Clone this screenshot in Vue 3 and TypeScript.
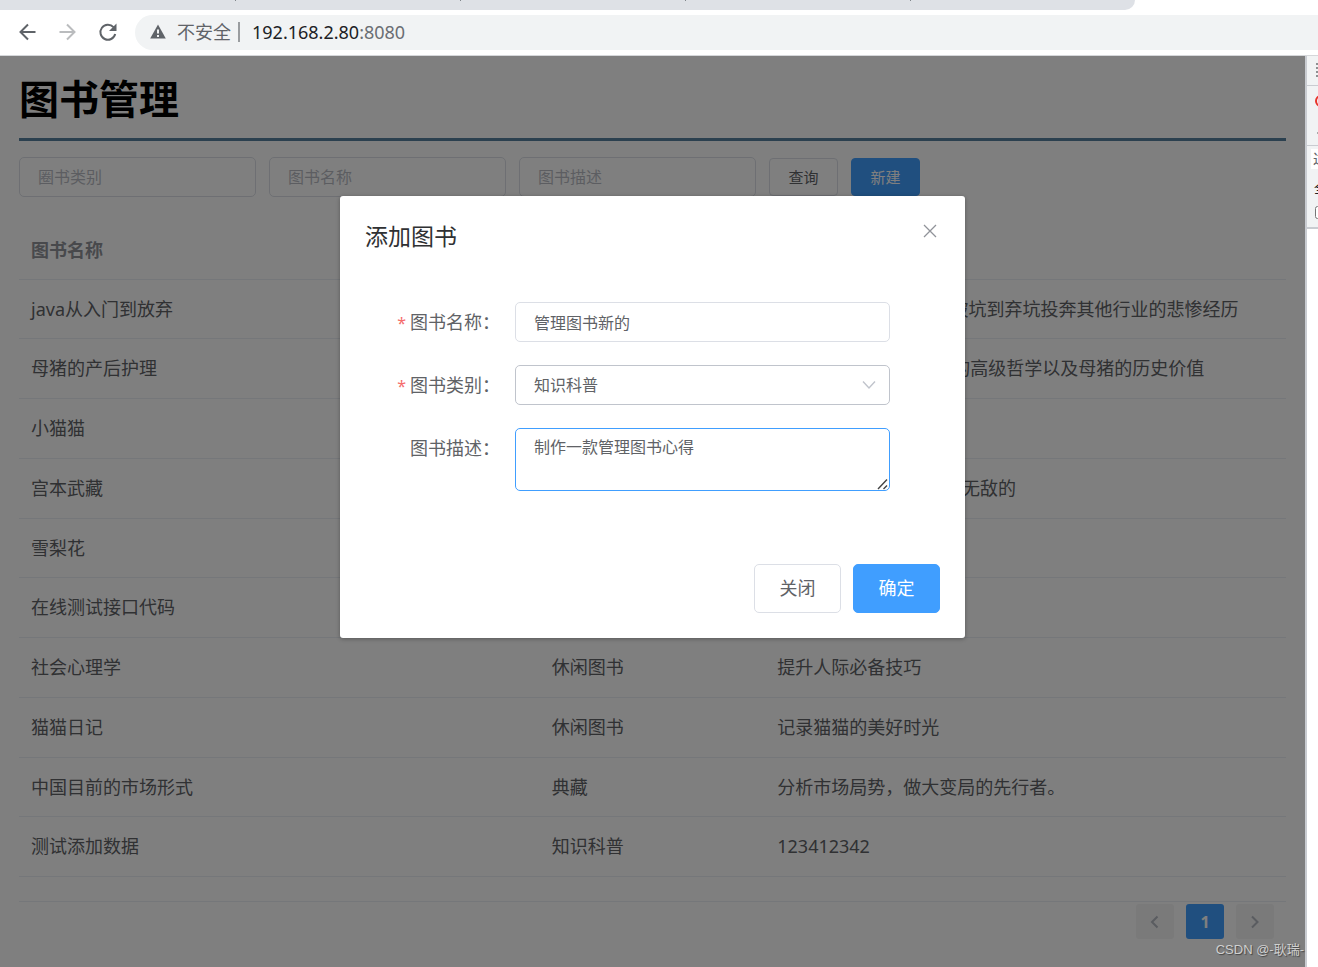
<script setup lang="ts">
import { ref } from 'vue'

interface Book {
  name: string
  type: string
  description: string
}

const books: Book[] = [
  { name: 'java从入门到放弃', type: '典藏', description: '讲述it从业者从入坑到被坑到弃坑投奔其他行业的悲惨经历' },
  { name: '母猪的产后护理', type: '知识科普', description: '浅谈100种母猪护理中的高级哲学以及母猪的历史价值' },
  { name: '小猫猫', type: '休闲图书', description: '' },
  { name: '宫本武藏', type: '典藏', description: '宫本武藏的二刀流剑法 无敌的' },
  { name: '雪梨花', type: '休闲图书', description: '' },
  { name: '在线测试接口代码', type: '知识科普', description: '' },
  { name: '社会心理学', type: '休闲图书', description: '提升人际必备技巧' },
  { name: '猫猫日记', type: '休闲图书', description: '记录猫猫的美好时光' },
  { name: '中国目前的市场形式', type: '典藏', description: '分析市场局势，做大变局的先行者。' },
  { name: '测试添加数据', type: '知识科普', description: '123412342' },
]

const filters = ['圈书类别', '图书名称', '图书描述']
const types = ['知识科普', '休闲图书', '典藏']

const name = ref('管理图书新的')
const type = ref('知识科普')
const description = ref('制作一款管理图书心得')
</script>

<template>
  <div class="window">
    <header class="chrome">
      <div class="tabs"><i v-for="n in 4" :key="n" class="tab"></i></div>
      <div class="toolbar">
        <button class="nav" aria-label="后退">
          <svg width="20" height="20" viewBox="0 0 20 20" fill="none" stroke="#5f6368" stroke-width="2"><path d="M18.500 9H4M11 1.500L3.500 9l7.500 7.500" /></svg>
        </button>
        <button class="nav" aria-label="前进">
          <svg width="20" height="20" viewBox="0 0 20 20" fill="none" stroke="#babcbe" stroke-width="2"><path d="M2.500 9H17M10 1.500L17.500 9l-7.500 7.500" /></svg>
        </button>
        <button class="nav" aria-label="刷新">
          <svg width="20" height="20" viewBox="0 0 20 20"><path d="M16.500 4.200A7.500 7.500 0 1 0 18.200 11" fill="none" stroke="#5f6368" stroke-width="2" /><path d="M19.500 0.500V8H12z" fill="#5f6368" /></svg>
        </button>
        <div class="address">
          <svg width="16" height="15" viewBox="0 0 16 15"><path d="M8 0.500L15.800 14.500H0.200z" fill="#5f6368" /><path d="M8 5.500v4M8 11v2" stroke="#f1f3f4" stroke-width="2" /></svg>
          <span class="unsafe">不安全</span>
          <span class="host">192.168.2.80<span class="port">:8080</span></span>
        </div>
      </div>
    </header>

    <div class="content">
      <main class="page">
        <h1>图书管理</h1>
        <form class="filters" @submit.prevent>
          <input v-for="f in filters" :key="f" type="text" :placeholder="f" :aria-label="f" />
          <button class="query">查询</button>
          <button class="create">新建</button>
        </form>

        <table>
          <colgroup><col class="c-name" /><col class="c-type" /><col /></colgroup>
          <thead>
            <tr><th>图书名称</th><th>图书类别</th><th>图书描述</th></tr>
          </thead>
          <tbody>
            <tr v-for="b in books" :key="b.name">
              <td>{{ b.name }}</td><td>{{ b.type }}</td><td>{{ b.description }}</td>
            </tr>
          </tbody>
        </table>

        <nav class="pager" aria-label="分页">
          <button disabled aria-label="上一页"><svg width="12" height="14" viewBox="0 0 12 14"><path d="M8.500 1.500L3 7l5.500 5.500" /></svg></button>
          <button class="current">1</button>
          <button disabled aria-label="下一页"><svg width="12" height="14" viewBox="0 0 12 14"><path d="M3 1.500L8.500 7 3 12.500" /></svg></button>
        </nav>

        <div class="overlay">
          <section class="dialog" role="dialog" aria-labelledby="dialog-title">
            <div class="dialog-head">
              <h2 id="dialog-title">添加图书</h2>
              <button class="close" aria-label="关闭对话框">
                <svg width="14" height="14" viewBox="0 0 14 14"><path d="M1 1l12 12M13 1l-12 12" /></svg>
              </button>
            </div>
            <form class="fields" @submit.prevent>
              <label for="book-name"><b>*</b>图书名称：</label>
              <input id="book-name" v-model="name" type="text" />
              <label for="book-type"><b>*</b>图书类别：</label>
              <div class="select">
                <select id="book-type" v-model="type">
                  <option v-for="t in types" :key="t">{{ t }}</option>
                </select>
                <svg width="14" height="10" viewBox="0 0 14 10"><path d="M1 1.500l6 6.500 6-6.500" /></svg>
              </div>
              <label for="book-desc">图书描述：</label>
              <div class="area">
                <textarea id="book-desc" v-model="description"></textarea>
                <svg width="12" height="12" viewBox="0 0 12 12"><path d="M1 11L10 1.500M6.500 11L10 7.500" /></svg>
              </div>
            </form>
            <div class="actions">
              <button class="cancel">关闭</button>
              <button class="confirm">确定</button>
            </div>
          </section>
        </div>
        <span class="watermark">CSDN @-耿瑞-</span>
      </main>

      <aside class="devtools">
        <div class="dt-tabs"><svg width="4" height="18" viewBox="0 0 4 18"><path d="M2 1v16" stroke="#8e9092" stroke-width="4" stroke-dasharray="2 2" /></svg></div>
        <div class="dt-record">
          <svg width="12" height="12" viewBox="0 0 12 12"><circle cx="6" cy="6" r="5" fill="none" stroke="#e8332a" stroke-width="2" /></svg>
          <i></i>
        </div>
        <div class="dt-filter">
          <span class="dt-input">过</span>
          <span class="dt-all">全</span>
          <input type="checkbox" aria-label="过滤" />
        </div>
      </aside>
    </div>
  </div>
</template>

<style>
body { margin: 0; }
</style>

<style scoped>
* { box-sizing: border-box; }
.window {
  display: flex;
  flex-direction: column;
  min-height: 100vh;
  overflow: hidden;
  background: #fff;
  color: #606266;
  font: 18px/24px "Noto Sans", "Noto Sans CJK SC", sans-serif;
}
button, input, select, textarea { font-family: inherit; margin: 0; }
button { padding: 0; cursor: pointer; }
svg { display: block; flex: none; }

.chrome { border-bottom: 1px solid #d5d7da; }
.tabs {
  display: flex;
  width: 86.1%;
  height: 10px;
  padding-left: 11px;
  background: #dee1e6;
  border-radius: 0 0 10px 0;
}
.tab { width: 225px; height: 1px; border-right: 1px solid #80868b; }
.toolbar { display: flex; align-items: center; height: 45px; padding-left: 17px; }
.nav { width: 20px; height: 20px; margin-right: 20px; border: 0; background: none; }
.address {
  display: flex;
  flex: 1;
  align-items: center;
  height: 35px;
  margin-left: -2px;
  padding: 0 0 2px 15px;
  border-radius: 18px 0 0 18px;
  background: #f1f3f4;
}
.unsafe { margin-left: 11px; padding-right: 7px; border-right: 2px solid #9a9da0; line-height: 20px; color: #5f6368; }
.host { margin-left: 12px; color: #202124; }
.port { color: #6a6e73; }

.content { display: flex; flex: 1; }
.page { position: relative; flex: 1; min-width: 0; padding: 17px 19px 28px; }
h1 {
  margin: 0;
  padding-bottom: 13px;
  border-bottom: 3px solid #56819f;
  color: #000;
  font-size: 40px;
  line-height: 52px;
}
.filters { display: flex; align-items: center; gap: 13px; margin-top: 16px; }
input[type="text"], select, textarea {
  width: 100%;
  height: 40px;
  padding: 0 18px;
  border: 1px solid #dcdfe6;
  border-radius: 5px;
  outline: 0;
  background: #fff;
  color: #606266;
  font-size: 16px;
}
.filters input[type="text"] { width: 237px; }
.filters input::placeholder { color: #b8bbc3; opacity: 1; }
.filters button { width: 69px; height: 38px; padding-bottom: 2px; border: 1px solid #dcdfe6; border-radius: 4px; background: #fff; color: #606266; font-size: 15px; }
.filters .create { border-color: #409eff; background: #409eff; color: #fff; }

table { width: 100%; margin-top: 23px; border-spacing: 0; table-layout: fixed; }
.c-name { width: 41.1%; }
.c-type { width: 17.8%; }
th, td { height: 60px; padding: 0 12px; border-bottom: 1px solid #ebeef5; text-align: left; white-space: nowrap; }
th { color: #909399; }
td { padding-bottom: 1px; }
tbody tr:nth-child(4n + 1) td { height: 59px; }

.pager {
  display: flex;
  justify-content: flex-end;
  gap: 12px;
  margin-top: 24px;
  padding: 2px 12px 0;
  border-top: 1px solid #ebeef5;
}
.pager button {
  display: flex;
  align-items: center;
  justify-content: center;
  width: 38px;
  height: 35px;
  border: 0;
  border-radius: 3px;
  background: #f4f4f5;
}
.pager .current { background: #409eff; color: #fff; font-size: 16px; font-weight: 700; }
.pager path { fill: none; stroke: #b4b8c0; stroke-width: 2; }

.overlay { position: absolute; inset: 0; padding: 140px 20px 0; background: rgba(0, 0, 0, 0.5); }
.dialog {
  width: 100%;
  max-width: 625px;
  margin: 0 auto;
  padding: 25px;
  border-radius: 3px;
  background: #fff;
  box-shadow: 0 1px 4px rgba(0, 0, 0, 0.3);
}
.dialog-head { display: flex; justify-content: space-between; }
h2 { margin: 0; color: #303133; font-size: 23px; font-weight: 400; line-height: 30px; }
.close { display: flex; align-items: center; justify-content: center; width: 20px; height: 20px; border: 0; background: none; }
.close path { fill: none; stroke: #909399; stroke-width: 1.3; }
.fields { display: grid; grid-template-columns: 135px 1fr; gap: 23px 15px; padding: 51px 50px 0 0; }
.fields label { line-height: 40px; text-align: right; white-space: nowrap; }
.fields b { margin-right: 4px; color: #f56c6c; font-size: 16px; font-weight: 400; line-height: 20px; }
.select, .area { position: relative; }
.select select { display: block; appearance: none; border-color: #c0c4cc; }
.select svg { position: absolute; top: 15px; right: 14px; pointer-events: none; }
.select path { fill: none; stroke: #c0c4cc; stroke-width: 1.4; }
.fields textarea { display: block; height: 63px; padding: 6px 18px; border-color: #409eff; line-height: 24px; resize: none; }
.area svg { position: absolute; right: 1px; bottom: 1px; pointer-events: none; }
.area path { fill: none; stroke: #444; stroke-width: 1.4; }
.actions { display: flex; justify-content: flex-end; gap: 12px; margin-top: 73px; }
.actions button { width: 87px; height: 49px; padding-bottom: 4px; border: 1px solid #dcdfe6; border-radius: 5px; background: #fff; color: #606266; font-size: 18px; }
.actions .confirm { border-color: #409eff; background: #409eff; color: #fff; }

.watermark {
  position: absolute;
  right: 1px;
  bottom: 7px;
  color: #d0d0d0;
  font: 13px/20px "Liberation Sans", "Noto Sans CJK SC", sans-serif;
  text-shadow: 1px 1px 1px #444;
}

.devtools { width: 13px; overflow: hidden; border-left: 2px solid #c9ccd1; }
.dt-tabs, .dt-record, .dt-filter { background: #f1f3f4; border-bottom: 1px solid #c9ccd1; }
.dt-tabs { height: 30px; padding: 6px 0 0 9px; }
.dt-record { height: 60px; padding: 9px 0 0 8px; }
.dt-record i { display: block; width: 6px; height: 2px; margin: 25px 0 0 2px; background: #aaa; }
.dt-filter { display: flex; flex-direction: column; height: 83px; padding-top: 3px; border-bottom-width: 2px; font-size: 14px; line-height: 20px; }
.dt-input { width: 20px; margin-left: 4px; padding-left: 2px; background: #fff; }
.dt-all { width: 20px; margin: 9px 0 0 7px; color: #202124; }
.dt-filter input { width: 13px; height: 13px; margin: 8px 0 0 8px; }
</style>
